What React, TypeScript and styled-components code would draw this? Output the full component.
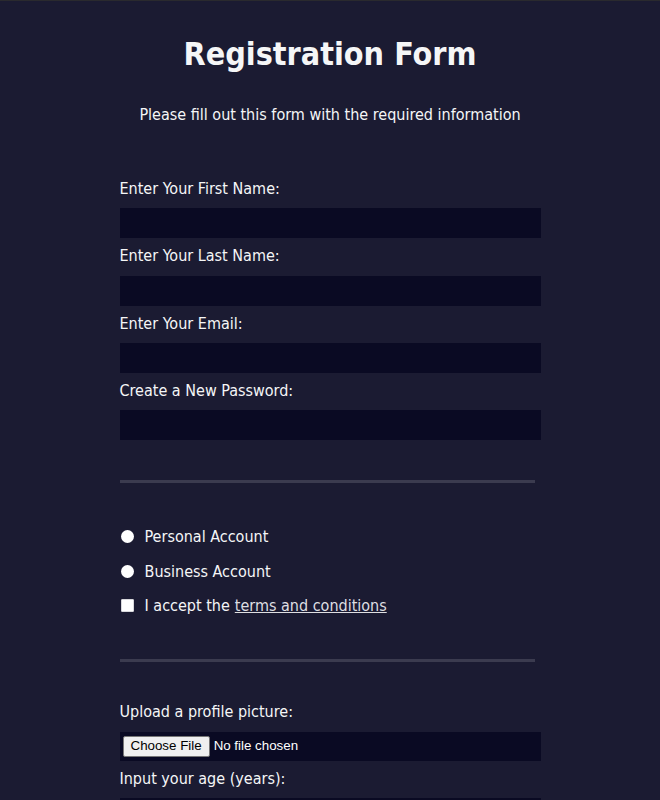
import React from "react";
import styled, { createGlobalStyle } from "styled-components";

const GlobalStyle = createGlobalStyle`
  html, body {
    margin: 0;
    padding: 0;
    background: #1b1b32;
  }
  body {
    color: #f5f6f7;
    font-family: "DejaVu Sans Condensed", "DejaVu Sans", Verdana, sans-serif;
    font-stretch: condensed;
    font-size: 16px;
  }
  * { box-sizing: border-box; }
`;

const Page = styled.div`
  border-top: 1px solid #2a2a2e;
  min-height: 800px;
`;

const Title = styled.h1`
  margin: 34px auto 31px;
  text-align: center;
  font-size: 32px;
  line-height: 39px;
  font-weight: 700;
`;

const Intro = styled.p`
  margin: 0 auto 15px;
  text-align: center;
  line-height: 19px;
`;

const Form = styled.form`
  width: 421px;
  margin: 0 auto;
  padding-bottom: 32px;
`;

const Section = styled.fieldset`
  width: 415px;
  margin: 0;
  border: none;
  padding: 32px 0;
  border-bottom: 3px solid #3b3b4f;
  &:last-of-type {
    border-bottom: none;
  }
`;

const Field = styled.label`
  display: block;
  margin: 8px 0;
  line-height: 19.33px;
`;

const TextInput = styled.input`
  display: block;
  width: calc(100% + 6px);
  height: 30px;
  margin: 10px 0 0;
  background: #0a0a23;
  border: 1px solid #0a0a23;
  color: #ffffff;
  outline: none;
`;

const ChoiceRow = styled.label`
  display: flex;
  align-items: center;
  height: 26.67px;
  margin: 8px 0;
  line-height: 19px;
`;

const Radio = styled.input`
  appearance: none;
  width: 13px;
  height: 13px;
  margin: 0 11px 0 1px;
  border-radius: 50%;
  background: #ffffff;
  border: none;
`;

const Check = styled.input`
  appearance: none;
  width: 13px;
  height: 13px;
  margin: 0 11px 0 1px;
  border-radius: 1px;
  background: #ffffff;
  border: 1px solid #d8d8dc;
`;

const TermsLink = styled.a`
  color: #dfdfe2;
  text-decoration: underline;
  margin-left: 5px;
`;

const FileBox = styled.div`
  display: flex;
  align-items: center;
  width: calc(100% + 6px);
  height: 29px;
  margin-top: 10px;
  padding: 0 3px;
  background: #0a0a23;
  font-family: "Liberation Sans", Arial, sans-serif;
  font-stretch: normal;
  font-size: 13.33px;
`;

const FileButton = styled.span`
  display: inline-flex;
  align-items: center;
  height: 21px;
  padding: 0 7px;
  background: #efefef;
  color: #000000;
  border: 1px solid #767676;
  border-radius: 2px;
  margin-right: 4px;
`;

const FileStatus = styled.span`
  color: #ffffff;
`;

const Select = styled.select`
  display: block;
  width: calc(100% + 6px);
  height: 30px;
  margin-top: 10px;
  background: #0a0a23;
  color: #ffffff;
  border: 1px solid #0a0a23;
`;

const Bio = styled.textarea`
  display: block;
  width: calc(100% + 6px);
  height: 60px;
  margin-top: 10px;
  background: #0a0a23;
  color: #ffffff;
  border: 1px solid #0a0a23;
`;

const Submit = styled.button`
  display: block;
  width: 60%;
  margin: 16px auto 0;
  height: 30px;
  font-size: 17px;
  background: #3b3b4f;
  color: #ffffff;
  border: 3px solid white;
`;

export default function App() {
  return (
    <Page>
      <GlobalStyle />
      <Title>Registration Form</Title>
      <Intro>Please fill out this form with the required information</Intro>
      <Form onSubmit={(e) => e.preventDefault()}>
        <Section>
          <Field>
            Enter Your First Name:
            <TextInput type="text" />
          </Field>
          <Field>
            Enter Your Last Name:
            <TextInput type="text" />
          </Field>
          <Field>
            Enter Your Email:
            <TextInput type="email" />
          </Field>
          <Field>
            Create a New Password:
            <TextInput type="password" />
          </Field>
        </Section>
        <Section>
          <ChoiceRow>
            <Radio type="radio" name="account-type" />
            Personal Account
          </ChoiceRow>
          <ChoiceRow>
            <Radio type="radio" name="account-type" />
            Business Account
          </ChoiceRow>
          <ChoiceRow>
            <Check type="checkbox" />
            I accept the<TermsLink href="#">terms and conditions</TermsLink>
          </ChoiceRow>
        </Section>
        <Section>
          <Field>
            Upload a profile picture:
            <FileBox>
              <FileButton>Choose File</FileButton>
              <FileStatus>No file chosen</FileStatus>
            </FileBox>
          </Field>
          <Field>
            Input your age (years):
            <TextInput type="number" />
          </Field>
          <Field>
            How did you hear about us?
            <Select>
              <option>(select one)</option>
            </Select>
          </Field>
          <Field>
            Provide a bio:
            <Bio />
          </Field>
        </Section>
        <Submit type="submit">Submit</Submit>
      </Form>
    </Page>
  );
}
